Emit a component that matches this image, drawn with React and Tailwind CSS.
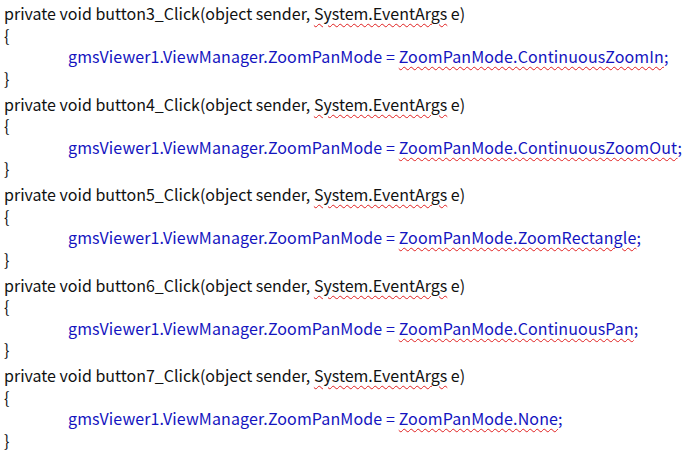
import React from 'react';

const blocks = [
  { n: 3, mode: 'ContinuousZoomIn' },
  { n: 4, mode: 'ContinuousZoomOut' },
  { n: 5, mode: 'ZoomRectangle' },
  { n: 6, mode: 'ContinuousPan' },
  { n: 7, mode: 'None' },
];

const wavy = 'underline decoration-wavy decoration-[#e02020] decoration-1 underline-offset-[3px]';

function Line({ children, indent }) {
  return (
    <div className={`h-[21.5px] leading-[21.5px] whitespace-pre ${indent ? 'pl-[68px]' : 'pl-[4px]'}`}>
      {children}
    </div>
  );
}

export default function App() {
  return (
    <div
      className="w-[692px] h-[461px] bg-white text-[#111] text-[16px] overflow-hidden pt-[3px]"
      style={{ fontFamily: '"Noto Sans CJK SC", "Noto Sans", sans-serif' }}
    >
      {blocks.map(b => (
        <div key={b.n} className="pb-[4.5px]">
          <Line>
            private void button{b.n}_Click(object sender, <span className={wavy}>System.EventArgs</span> e)
          </Line>
          <Line>{'{'}</Line>
          <Line indent>
            <span className="text-[#1414c0] tracking-[0.12px]">
              gmsViewer1.ViewManager.ZoomPanMode = <span className={wavy}>ZoomPanMode.{b.mode}</span>;
            </span>
          </Line>
          <Line>{'}'}</Line>
        </div>
      ))}
    </div>
  );
}
